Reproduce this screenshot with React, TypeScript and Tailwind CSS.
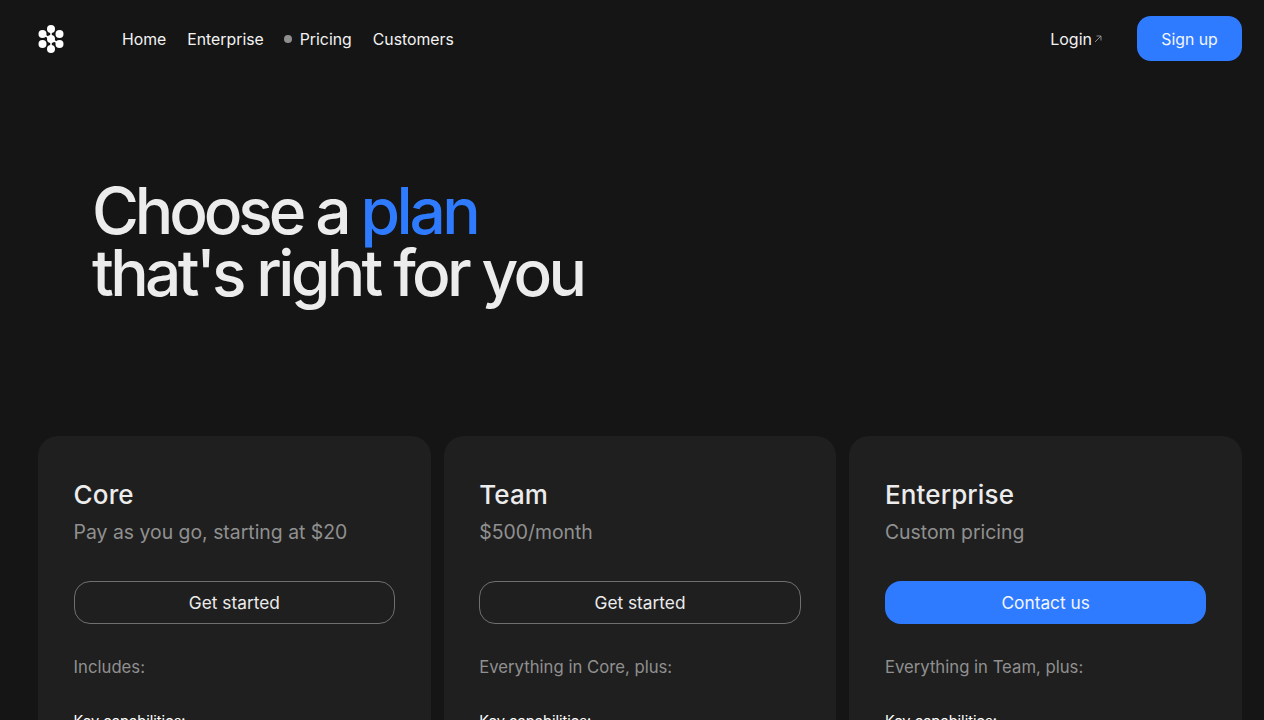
const font = { fontFamily: 'Inter, sans-serif' };

function Logo() {
  const dots = [
    [13, 4], [21.5, 9], [21.5, 19], [13, 24], [4.5, 19], [4.5, 9], [13, 14],
  ];
  return (
    <svg width="26" height="28" viewBox="0 0 26 28" fill="#fff" stroke="#fff">
      <path d="M13 14 21.5 19M13 14 4.5 9M13 14V4M13 14V24" strokeWidth="1.6" />
      {dots.map(([x, y]) => (
        <circle key={`${x}-${y}`} cx={x} cy={y} r="4" stroke="none" />
      ))}
    </svg>
  );
}

const plans = [
  { name: 'Core', price: 'Pay as you go, starting at $20', cta: 'Get started', inc: 'Includes:', primary: false },
  { name: 'Team', price: '$500/month', cta: 'Get started', inc: 'Everything in Core, plus:', primary: false },
  { name: 'Enterprise', price: 'Custom pricing', cta: 'Contact us', inc: 'Everything in Team, plus:', primary: true },
];

export default function App() {
  return (
    <div style={font} className="h-[720px] overflow-hidden bg-[#151515] pl-[38px] pr-[22px] text-[#ececec] antialiased">
      <header className="flex h-[77px] items-center justify-between">
        <nav className="flex items-center text-[15.8px] text-[#f2f2f2]">
          <div className="mr-[58px] flex w-[26px]"><Logo /></div>
          <a className="mr-[21px] mt-[3px]">Home</a>
          <a className="mr-[20px] mt-[3px]">Enterprise</a>
          <span className="mr-[8px] mt-[1px] h-2 w-2 rounded-full bg-[#8f8f8f]" />
          <a className="mr-[21px] mt-[3px]">Pricing</a>
          <a className="mt-[3px]">Customers</a>
        </nav>
        <div className="flex items-center">
          <a className="mt-[1px] text-[16px] text-[#f2f2f2]">Login</a>
          <svg className="ml-[2px] mr-[35px]" width="8" height="8" viewBox="0 0 8 8" fill="none" stroke="#a8a8a8" strokeWidth="0.8">
            <path d="M1 7 7 1M2.5 1H7V5.5" />
          </svg>
          <button className="h-[45px] w-[105px] rounded-[14px] bg-[#2f7bff] pt-[2px] text-[15.8px] text-[#f2f6ff]">Sign up</button>
        </div>
      </header>

      <h1 className="ml-[54px] mt-[103px] text-[64px] font-medium leading-[62px] tracking-[-0.057em] text-[#ececec]">
        <span className="tracking-[-0.064em]">Choose a </span>
        <span className="tracking-[-0.0525em] text-[#2f7bff]">plan</span>
        <br />
        that's right for you
      </h1>

      <section className="mt-[132px] grid grid-cols-3 gap-[13px]">
        {plans.map((p) => (
          <article key={p.name} className="h-[400px] rounded-[20px] bg-[#1f1f1f] px-[35.6px] pt-[42px]">
            <h2 className="text-[26px] font-medium leading-[34px] tracking-[0.005em] text-[#ececec]">{p.name}</h2>
            <p className="mt-[5px] text-[19.4px] leading-[30px] text-[#909090]">{p.price}</p>
            <button
              className={
                p.primary
                  ? 'mt-[34px] h-[43px] w-full rounded-[16px] bg-[#2f7bff] text-[17.3px] text-[#f2f6ff]'
                  : 'mt-[34px] h-[43px] w-full rounded-[16px] border border-[#6f6f6f] text-[17.3px] text-[#ececec]'
              }
            >
              {p.cta}
            </button>
            <p className="mt-[31px] text-[16.7px] leading-[24px] text-[#909090]">{p.inc}</p>
            <p className="mt-[30px] text-[14.6px] leading-[24px] text-white">Key capabilities:</p>
          </article>
        ))}
      </section>
    </div>
  );
}
